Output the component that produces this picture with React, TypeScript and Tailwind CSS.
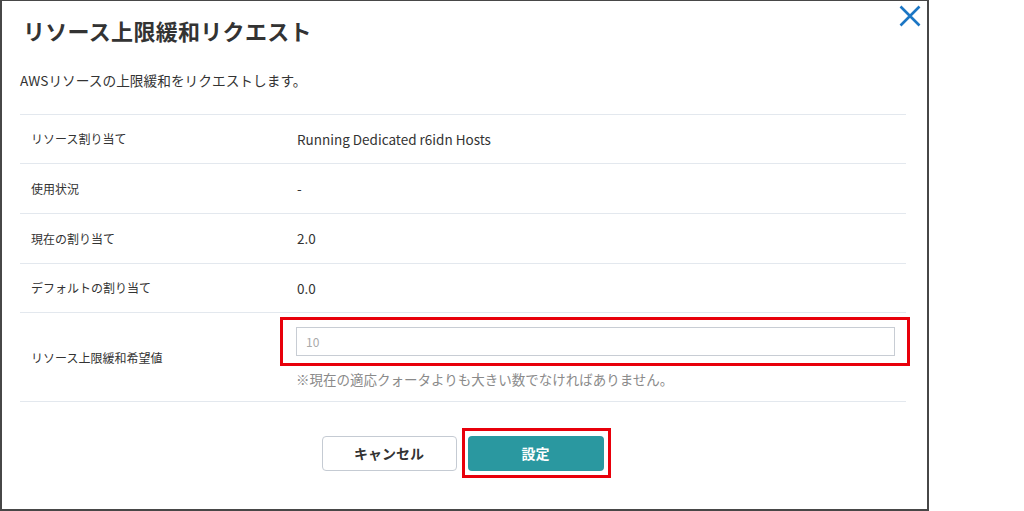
const font = { fontFamily: '"Noto Sans CJK JP", "Noto Sans", sans-serif' };

type Row = { label: string; value: string; h: string };

const rows: Row[] = [
  { label: "リソース割り当て", value: "Running Dedicated r6idn Hosts", h: "h-[49px]" },
  { label: "使用状況", value: "-", h: "h-[50px]" },
  { label: "現在の割り当て", value: "2.0", h: "h-[50px]" },
  { label: "デフォルトの割り当て", value: "0.0", h: "h-[49px]" },
];

const CloseIcon = () => (
  <svg width="24" height="24" viewBox="0 0 24 24" fill="none">
    <path d="M2.5 2.5l19 19M21.5 2.5l-19 19" stroke="#1b76c4" strokeWidth="2.6" />
  </svg>
);

export default function App() {
  return (
    <div className="w-[1024px] h-[511px] bg-white flex" style={font}>
      <div className="relative w-[929px] h-[511px] border-l-2 border-r-2 border-b-2 border-t border-[#474747] bg-white px-[18px] text-[#333]">
        <button className="absolute top-[3px] right-[5px]">
          <CloseIcon />
        </button>

        <h1 className="pt-[12px] pl-[3px] text-[22px] leading-[34px] font-bold tracking-[0.3px] text-[#333]">
          リソース上限緩和リクエスト
        </h1>

        <p className="mt-[23px] text-[13.7px] leading-[20px]">
          AWSリソースの上限緩和をリクエストします。
        </p>

        <div className="mt-[24px] mr-[3px] border-t border-[#e3e8ee]">
          {rows.map((r) => (
            <div key={r.label} className={`flex items-center border-b border-[#e3e8ee] ${r.h}`}>
              <div className="w-[277px] pl-[11px] text-[12px]">{r.label}</div>
              <div className="text-[13.5px]">{r.value}</div>
            </div>
          ))}
          <div className="flex items-center border-b border-[#e3e8ee] h-[89px]">
            <div className="w-[276px] pl-[11px] pt-[2px] text-[12px]">リソース上限緩和希望値</div>
            <div className="flex-1 pr-[11px] pt-[1px]">
              <div className="relative">
                <input
                  placeholder="10"
                  className="w-full h-[29px] border border-[#c8cdd4] bg-white px-[9px] text-[12px] placeholder:text-[#aaa] outline-none"
                  style={font}
                />
                <div className="absolute -left-[16px] -right-[15px] -top-[10px] -bottom-[10px] border-[3px] border-[#e8000b] pointer-events-none" />
              </div>
              <p className="mt-[14px] text-[13.5px] leading-[18px] text-[#8a8a8a]">
                ※現在の適応クォータよりも大きい数でなければありません。
              </p>
            </div>
          </div>
        </div>

        <div className="mt-[34px] mr-[4px] flex justify-center gap-[11px]">
          <button className="w-[135px] h-[35px] rounded-[4px] border border-[#c5cbd3] bg-white text-[14px] font-bold text-[#333]">
            キャンセル
          </button>
          <div className="relative">
            <button className="w-[136px] h-[35px] rounded-[4px] bg-[#2a98a0] text-[14px] font-bold text-white">
              設定
            </button>
            <div className="absolute -left-[6px] -right-[7px] -top-[8px] -bottom-[7px] border-[3px] border-[#e8000b] pointer-events-none" />
          </div>
        </div>
      </div>
    </div>
  );
}
